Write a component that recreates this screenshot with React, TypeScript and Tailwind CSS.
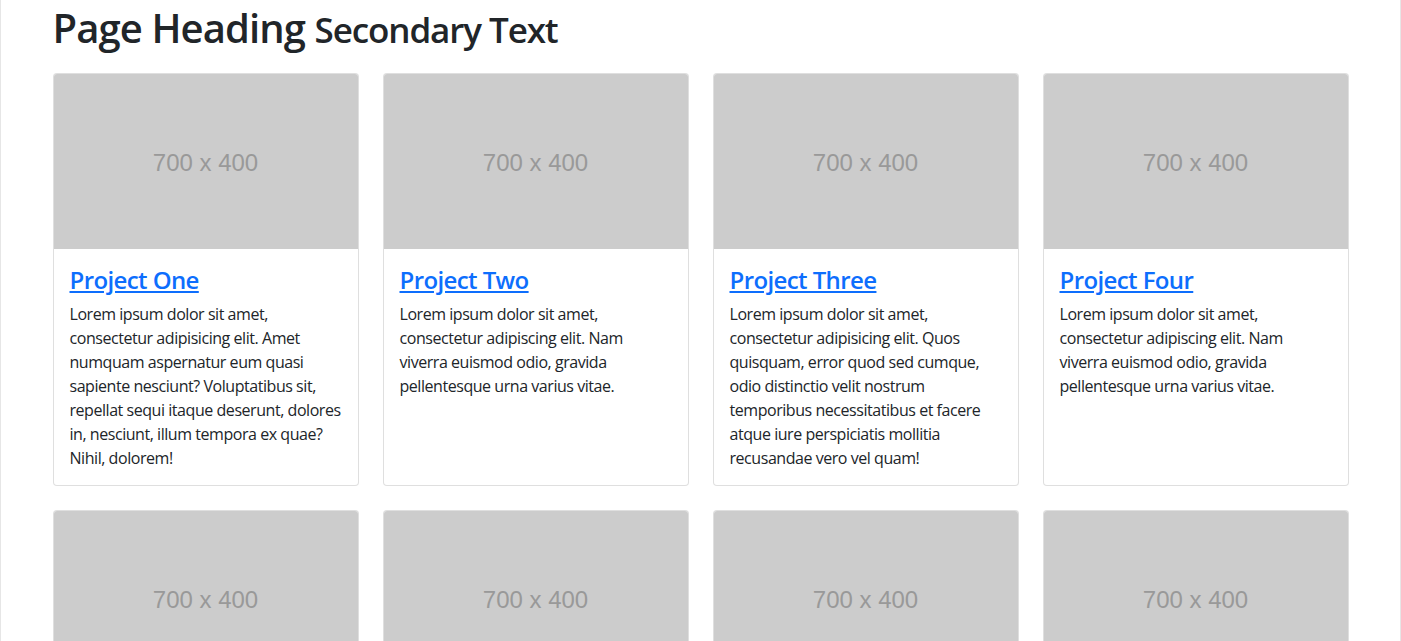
import React from "react";

const projects = [
  {
    title: "Project One",
    text: "Lorem ipsum dolor sit amet, consectetur adipisicing elit. Amet numquam aspernatur eum quasi sapiente nesciunt? Voluptatibus sit, repellat sequi itaque deserunt, dolores in, nesciunt, illum tempora ex quae? Nihil, dolorem!",
  },
  {
    title: "Project Two",
    text: "Lorem ipsum dolor sit amet, consectetur adipiscing elit. Nam viverra euismod odio, gravida pellentesque urna varius vitae.",
  },
  {
    title: "Project Three",
    text: "Lorem ipsum dolor sit amet, consectetur adipisicing elit. Quos quisquam, error quod sed cumque, odio distinctio velit nostrum temporibus necessitatibus et facere atque iure perspiciatis mollitia recusandae vero vel quam!",
  },
  {
    title: "Project Four",
    text: "Lorem ipsum dolor sit amet, consectetur adipiscing elit. Nam viverra euismod odio, gravida pellentesque urna varius vitae.",
  },
  {
    title: "Project Five",
    text: "Lorem ipsum dolor sit amet, consectetur adipiscing elit. Nam viverra euismod odio, gravida pellentesque urna varius vitae.",
  },
  {
    title: "Project Six",
    text: "Lorem ipsum dolor sit amet, consectetur adipisicing elit. Omnis quos nisi, voluptatum ratione dolorum fugiat.",
  },
  {
    title: "Project Seven",
    text: "Lorem ipsum dolor sit amet, consectetur adipiscing elit. Nam viverra euismod odio, gravida pellentesque urna varius vitae.",
  },
  {
    title: "Project Eight",
    text: "Lorem ipsum dolor sit amet, consectetur adipisicing elit. Eius adipisci dicta dignissimos neque animi ea, veritatis.",
  },
];

const App = () => {
  return (
    <div className="min-h-screen w-full bg-white border-x border-[#e6e6e6] text-[#212529] font-['Open_Sans',sans-serif]">
      <div className="w-[1320px] mx-auto px-3">
        {/* Heading */}
        <h1 className="pt-1 text-[40px] leading-[48px] font-semibold tracking-[-0.9px] mb-[19px]">
          Page Heading{" "}
          <small className="text-[35px] tracking-[-1.1px]">Secondary Text</small>
        </h1>

        <div className="grid grid-cols-4 gap-6">
          {projects.map((p) => (
            <div
              key={p.title}
              className="flex flex-col border border-black/[0.125] rounded overflow-hidden bg-white"
            >
              <div className="h-[175px] pt-[3px] bg-[#cccccc] flex items-center justify-center">
                <span className="text-[#999999] text-[24px] font-['Liberation_Sans',sans-serif]">
                  700 x 400
                </span>
              </div>
              <div className="px-4 pt-[17px] pb-[15px]">
                <h4 className="text-[24px] leading-[28px] font-semibold tracking-[-0.6px] mb-2">
                  <a href="#" className="text-[#0d6efd] underline">
                    {p.title}
                  </a>
                </h4>
                <p className="text-base leading-6 tracking-[-0.45px]">{p.text}</p>
              </div>
            </div>
          ))}
        </div>
      </div>
    </div>
  );
};

export default App;
